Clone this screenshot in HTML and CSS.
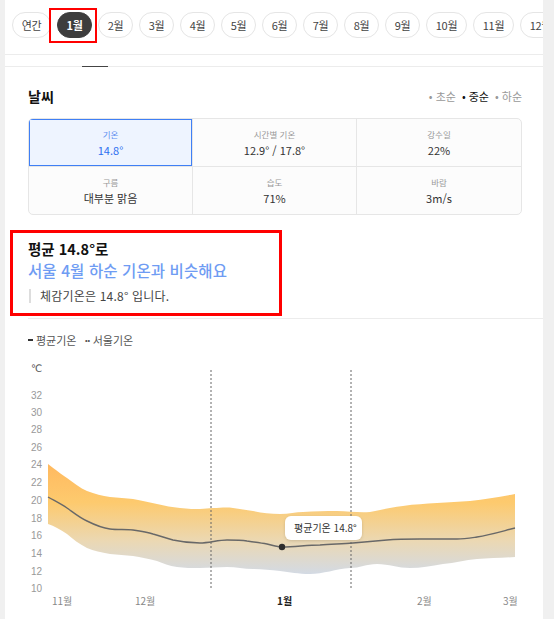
FILE: index.html
```html
<!DOCTYPE html>
<html lang="ko">
<head>
<meta charset="utf-8">
<link rel="stylesheet" href="styles.css">
</head>
<body>
<div class="page">
  <div class="tabs">
    <span class="pill w39">연간</span>
    <span class="pill active">1월<span class="mark mark-pill"></span></span>
    <span class="pill">2월</span>
    <span class="pill">3월</span>
    <span class="pill">4월</span>
    <span class="pill">5월</span>
    <span class="pill">6월</span>
    <span class="pill">7월</span>
    <span class="pill">8월</span>
    <span class="pill">9월</span>
    <span class="pill w41">10월</span>
    <span class="pill w41">11월</span>
    <span class="pill w41">12월</span>
  </div>
  <div class="subbar"><span class="indicator"></span></div>

  <section class="weather">
    <div class="head">
      <h2 class="title">날씨</h2>
      <div class="periods">
        <span class="period">• 초순</span>
        <span class="period on">• 중순</span>
        <span class="period">• 하순</span>
      </div>
    </div>
    <div class="grid">
      <div class="cell sel"><span class="lbl">기온</span><span class="val">14.8°</span></div>
      <div class="cell"><span class="lbl">시간별 기온</span><span class="val">12.9° / 17.8°</span></div>
      <div class="cell"><span class="lbl">강수일</span><span class="val">22%</span></div>
      <div class="cell"><span class="lbl">구름</span><span class="val">대부분 맑음</span></div>
      <div class="cell"><span class="lbl">습도</span><span class="val">71%</span></div>
      <div class="cell"><span class="lbl">바람</span><span class="val">3m/s</span></div>
    </div>

    <div class="summary">
      <span class="mark mark-summary"></span>
      <p class="s1">평균 14.8°로</p>
      <p class="s2">서울 4월 하순 기온과 비슷해요</p>
      <p class="s3">체감기온은 14.8° 입니다.</p>
    </div>
  </section>
  <div class="divider"></div>

  <div class="legend">
    <span class="lg"><span class="sw solid"></span>평균기온</span>
    <span class="lg"><span class="sw dots">··</span>서울기온</span>
  </div>

  <svg class="chart" width="538" height="264" viewBox="5 355 538 264" xmlns="http://www.w3.org/2000/svg">
    <defs>
      <linearGradient id="band" x1="0" y1="463" x2="0" y2="573" gradientUnits="userSpaceOnUse">
        <stop offset="0" stop-color="#ffb95f"/>
        <stop offset="0.35" stop-color="#fdca6e"/>
        <stop offset="0.7" stop-color="#ebd8b3"/>
        <stop offset="1" stop-color="#d3dae4"/>
      </linearGradient>
      <filter id="sh" x="-20%" y="-40%" width="140%" height="180%">
        <feDropShadow dx="0" dy="1" stdDeviation="1.5" flood-color="#000" flood-opacity="0.15"/>
      </filter>
    </defs>
    <text class="unit" x="31" y="371">℃</text>
    <g class="yl">
      <text x="31" y="398">32</text>
      <text x="31" y="415">30</text>
      <text x="31" y="432">28</text>
      <text x="31" y="450">26</text>
      <text x="31" y="467">24</text>
      <text x="31" y="485">22</text>
      <text x="31" y="503">20</text>
      <text x="31" y="521">18</text>
      <text x="31" y="538">16</text>
      <text x="31" y="556">14</text>
      <text x="31" y="574">12</text>
      <text x="31" y="591">10</text>
    </g>
    <path fill="url(#band)" d="M48,463 C56,469 61,473 67,477 C74,482 80,487 87,490 C95,493 102,495 110,496 C118,497 126,497 133,498 C142,500 149,501 157,503 C165,505 172,506 180,507 C188,508 195,508 200,508 C205,508 208,507 213,507 C220,507 226,506 233,507 C240,508 246,509 253,510 C262,512 270,513 280,513 C289,513 296,511 303,511 C315,510 325,510 337,510 C349,510 358,512 370,511 C382,509 391,506 403,505 C415,503 425,503 437,502 C449,501 459,501 470,500 C486,498 500,496 515,493 L515,556 C502,557 489,557 477,558 C465,559 455,562 443,563 C431,565 421,567 410,567 C398,567 389,563 377,563 C366,563 360,567 350,567 C336,568 323,573 310,573 C298,573 290,571 280,570 C270,569 262,568 253,568 C244,568 236,566 227,566 C218,566 209,567 200,567 C192,567 184,567 177,566 C169,565 163,562 157,560 C149,558 141,556 133,555 C125,554 118,554 110,553 C101,551 94,550 87,547 C79,543 73,538 67,533 C61,529 54,525 48,523 Z"/>
    <path fill="none" stroke="#686868" stroke-width="1.4" d="M48,496 C55,500 61,503 67,507 C74,512 80,517 87,520 C95,524 102,527 110,528 C118,529 126,528 133,529 C140,530 147,531 153,533 C160,535 166,537 173,539 C182,541 191,542 200,542 C209,542 218,539 227,539 C234,539 241,539 247,540 C254,541 261,542 267,543 C272,544 277,546 282,546 C295,546 307,544 320,544 C331,543 342,543 353,542 C364,541 376,540 387,539 C398,538 409,538 420,538 C432,538 445,538 457,538 C464,538 470,537 477,536 C490,534 503,530 515,527"/>
    <line class="dash" x1="211" y1="369" x2="211" y2="588"/>
    <line class="dash" x1="351" y1="369" x2="351" y2="588"/>
    <circle cx="282" cy="546" r="3.2" fill="#2e2e2e"/>
    <rect x="285" y="515" width="77" height="24" rx="6" fill="#fff" filter="url(#sh)"/>
    <text class="tip" x="294" y="530.5">평균기온 14.8°</text>
    <g class="xl">
      <text x="52" y="604">11월</text>
      <text x="135" y="604">12월</text>
      <text x="277" y="604" class="cur">1월</text>
      <text x="417" y="604">2월</text>
      <text x="503" y="604">3월</text>
    </g>
  </svg>
</div>
</body>
</html>
```

FILE: styles.css
```css
* { box-sizing: border-box; }
html, body { margin: 0; padding: 0; }
body {
  background: #f0f0f0;
  font-family: "Noto Sans CJK KR", "Noto Sans", "Liberation Sans", sans-serif;
  color: #222;
}
.page {
  margin-left: 5px;
  width: 538px;
  height: 619px;
  background: #fff;
  overflow: hidden;
  position: relative;
}
.tabs {
  display: flex;
  gap: 6px;
  padding: 12px 0 0 7px;
  height: 55px;
  border-bottom: 1px solid #ececec;
  white-space: nowrap;
}
.pill {
  position: relative;
  flex: none;
  width: 35px;
  height: 26px;
  border: 1px solid #e5e5e5;
  border-radius: 13px;
  display: flex;
  align-items: center;
  justify-content: center;
  font-size: 11px;
  color: #444;
  letter-spacing: -0.3px;
}
.pill.w39 { width: 39px; }
.pill.w41 { width: 41px; }
.pill.active {
  background: #3d3d3d;
  border-color: #3d3d3d;
  color: #fff;
  font-weight: 700;
}
.mark {
  position: absolute;
  border: 3px solid #f00;
  pointer-events: none;
}
.mark-pill {
  left: -9px;
  top: -5px;
  width: 48px;
  height: 35px;
  border-width: 2px;
}
.subbar {
  height: 12px;
  border-bottom: 1px solid #ececec;
  position: relative;
}
.indicator {
  position: absolute;
  left: 77px;
  bottom: -1px;
  width: 26px;
  height: 1px;
  background: #444;
}
.weather {
  padding: 0 21px 0 23px;
  position: relative;
}
.head {
  display: flex;
  align-items: center;
  justify-content: space-between;
  margin-top: 19px;
  height: 20px;
}
.title {
  margin: 0;
  font-size: 14px;
  font-weight: 700;
  color: #111;
}
.periods {
  display: flex;
  gap: 6px;
  font-size: 11px;
  color: #999;
}
.period.on { color: #111; }
.grid {
  margin-top: 12px;
  display: grid;
  grid-template-columns: 1fr 1fr 1fr;
  grid-template-rows: 48px 47px;
  border: 1px solid #e6e6e6;
  border-radius: 5px;
  background: #fcfcfc;
  overflow: hidden;
}
.cell {
  display: flex;
  flex-direction: column;
  align-items: center;
  justify-content: center;
  gap: 1px;
  border-right: 1px solid #e6e6e6;
  border-bottom: 1px solid #e6e6e6;
}
.cell:nth-child(3n) { border-right: none; }
.cell:nth-child(n+4) { border-bottom: none; }
.lbl { font-size: 8.5px; color: #999; line-height: 13px; }
.val { font-size: 11px; color: #333; line-height: 16px; }
.cell.sel {
  background: #eef4ff;
  box-shadow: inset 0 0 0 1px #3f7ff5;
}
.cell.sel .lbl { color: #5f8ff0; }
.cell.sel .val { color: #2b6ef0; }
.summary {
  position: relative;
  margin-top: 24px;
  height: 79px;
}
.mark-summary {
  left: -18px;
  top: -9px;
  width: 272px;
  height: 86px;
}
.summary p { margin: 0; }
.s1 {
  font-size: 14.5px;
  font-weight: 700;
  color: #111;
  line-height: 20px;
}
.s2 {
  font-size: 15.5px;
  font-weight: 500;
  color: #6f9cf3;
  line-height: 22px;
  letter-spacing: 0.1px;
}
.s3 {
  margin-top: 8px !important;
  font-size: 12px;
  color: #444;
  line-height: 14px;
  border-left: 2px solid #ddd;
  padding-left: 9px;
  margin-left: 1px !important;
  letter-spacing: 0.2px;
}
.divider {
  margin-left: 23px;
  height: 1px;
  background: #ececec;
}
.legend {
  display: flex;
  gap: 8px;
  padding: 10px 0 0 23px;
  height: 37px;
  font-size: 11px;
  color: #555;
}
.lg { display: flex; align-items: center; height: 22px; }
.sw.solid {
  display: inline-block;
  width: 5px;
  height: 2px;
  background: #333;
  margin-right: 3px;
}
.sw.dots {
  color: #555;
  margin-right: 3px;
  font-weight: 700;
  letter-spacing: -1px;
}
.chart { display: block; }
.unit { font-size: 10px; fill: #555; font-family: "DejaVu Sans", sans-serif; }
.yl text { font-size: 10px; fill: #999; font-family: "Liberation Sans", sans-serif; }
.xl text { font-size: 10px; fill: #888; }
.xl text.cur { fill: #222; font-weight: 700; }
.dash { stroke: #666; stroke-width: 1; stroke-dasharray: 2 2; }
.tip { font-size: 10px; fill: #333; }
```
